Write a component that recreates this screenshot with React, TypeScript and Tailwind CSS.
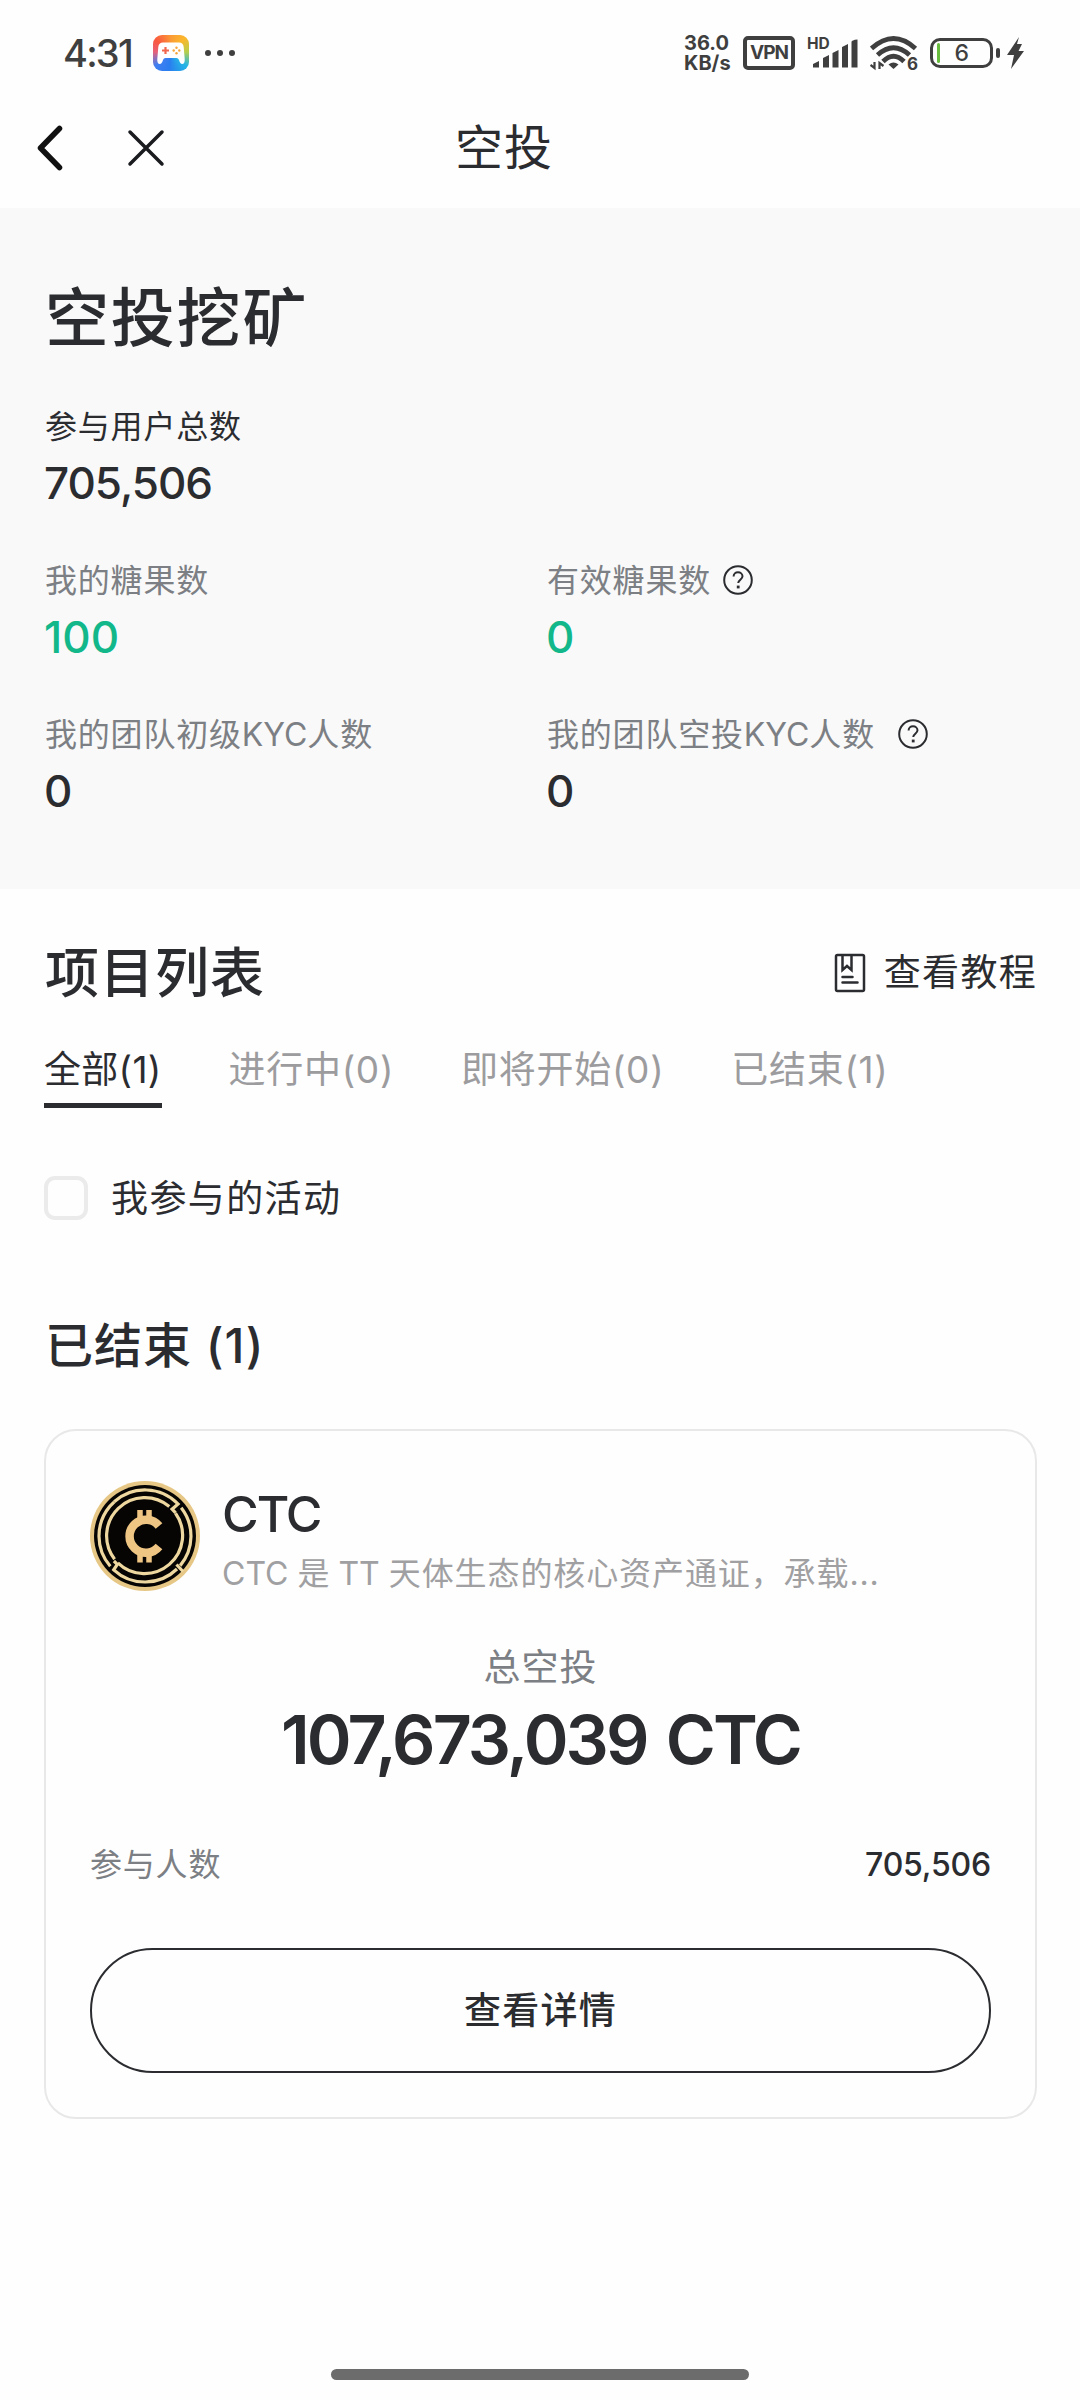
import type { ReactNode } from "react";

function HelpIcon() {
  return (
    <svg width="30" height="30" viewBox="0 0 30 30" fill="none" stroke="#2b2c30" strokeWidth="2">
      <circle cx="15" cy="15" r="13.8" />
      <path d="M10.6 11.6c0-2.6 1.9-4.3 4.4-4.3s4.5 1.6 4.5 4c0 3.3-4.3 3.5-4.3 6.8" />
      <path d="M13.8 22h2.8" strokeWidth="2.8" />
    </svg>
  );
}

function GameIcon() {
  return (
    <div className="h-9 w-9 overflow-hidden rounded-[9px] bg-[conic-gradient(from_0deg,#fb9a35,#fbb72c_12%,#b5cf4c_24%,#25b5e6_36%,#2a7df0_52%,#3f7ff2_64%,#e8617a_76%,#f9573f_86%,#fb9a35)]">
      <svg width="36" height="36" viewBox="0 0 36 36">
        <path d="M10 7.5h16c3 0 4.300 1.500 4.700 4.500l1 12c.3 3-.8 5-2.400 5s-2.500-1.600-3.300-4c-.5-1.300-1.300-2-2.500-2h-11c-1.200 0-2 .7-2.500 2-.8 2.400-1.700 4-3.300 4s-2.700-2-2.400-5l1-12c.4-3 1.700-4.500 4.700-4.500z" fill="#fff" />
        <path d="M12.500 12v7M9 15.500h7" stroke="#f2684f" strokeWidth="2.200" />
        <g fill="#f6a53a">
          <circle cx="23.500" cy="12.700" r="1.200" />
          <circle cx="23.500" cy="18.300" r="1.200" />
          <circle cx="20.700" cy="15.500" r="1.200" />
          <circle cx="26.300" cy="15.500" r="1.200" />
        </g>
      </svg>
    </div>
  );
}

function StatusBar() {
  return (
    <div className="flex h-[108px] items-center pr-14 pb-0.5 pl-[63px] text-[#3f3f40]">
      <div className="w-[90px] text-[38px] font-medium tracking-[-1.8px]">4:31</div>
      <GameIcon />
      <div className="ml-4 flex gap-1.5">
        <i className="h-1.5 w-1.5 rounded-full bg-[#3f3f40]" />
        <i className="h-1.5 w-1.5 rounded-full bg-[#3f3f40]" />
        <i className="h-1.5 w-1.5 rounded-full bg-[#3f3f40]" />
      </div>
      <div className="ml-auto flex items-center">
        <div className="w-[59px] text-[20px] leading-5 font-bold">
          <div>36.0</div>
          <div>KB/s</div>
        </div>
        <div className="flex h-[34px] w-[52px] items-center justify-center rounded-[5px] border-4 border-[#3f3f40] text-[19px] font-bold tracking-[-1px]">
          VPN
        </div>
        <div className="relative ml-3 h-[34px] w-[51px]">
          <span className="absolute top-[1px] left-0 text-[15.500px] leading-[14px] font-bold">HD</span>
          <svg className="absolute top-0 left-0" width="51" height="34" viewBox="0 0 51 34" fill="#3f3f40">
            <path d="M6 31.500V28l6-3v6.500zM16 31.500V22l6-3v12.500zM25.500 31.500V17l6-3v17.500zM35 31.500V11l6-3v23.500zM44.500 31.500V6q0-2 6-2.500v28z" />
          </svg>
        </div>
        <div className="relative ml-3 h-[36px] w-[48px]">
          <svg width="48" height="36" viewBox="0 0 48 36" fill="none" stroke="#3f3f40" strokeWidth="4.800">
            <path d="M1.500 13.500Q23.500-6.500 45.500 13.500" />
            <path d="M7.500 20Q23.500 5.500 39.500 20" />
            <path d="M13 26.500Q23.500 16 34 26.500" />
            <path d="M23.500 34l-5-4.500q5-4 10 0z" fill="#3f3f40" stroke="none" />
            <path d="M4.500 27v6l-4-3M9.500 34v-6l4 3" strokeWidth="2.200" />
          </svg>
          <span className="absolute top-[22px] left-[37px] text-[17px] leading-[14px] font-bold">6</span>
        </div>
        <div className="ml-3 flex h-[30px] w-[63px] items-center rounded-[10px] border-[3px] border-[#3f3f40] pl-1">
          <div className="h-[20px] w-[2.500px] rounded-full bg-[#68bd3f]" />
          <div className="flex-1 pr-1.5 text-center text-[23px] leading-none font-medium">6</div>
        </div>
        <div className="ml-[3px] h-[10px] w-1 rounded-full bg-[#3f3f40]" />
        <svg className="ml-[7px]" width="17" height="32" viewBox="0 0 17 32" fill="#3f3f40">
          <path d="M12 0 0 18h7L4 32l13-18h-5.500L15 7h-5z" />
        </svg>
      </div>
    </div>
  );
}

function NavBar() {
  return (
    <div className="flex h-[100px] items-center pb-[21px]">
      <svg className="ml-9" width="29" height="46" viewBox="0 0 29 46" fill="none" stroke="#111" strokeWidth="5.500" strokeLinecap="round" strokeLinejoin="round">
        <path d="M23.500 3.500 4.500 23l19 19.500" />
      </svg>
      <svg className="ml-[61px]" width="40" height="40" viewBox="0 0 40 40" fill="none" stroke="#1a1b1e" strokeWidth="3.500" strokeLinecap="round">
        <path d="m4 4 32 32M36 4 4 36" />
      </svg>
      <h1 className="ml-[289px] text-[48px] tracking-[1px]">空投</h1>
    </div>
  );
}

function Stat({ label, value, color, labelColor, icon }: { label: ReactNode; value: string; color: string; labelColor: string; icon?: string }) {
  return (
    <div>
      <div className={`flex h-12 items-center pl-px text-[32px] tracking-[0.8px] ${labelColor}`}>
        <span>{label}</span>
        {icon && (
          <span className={icon}>
            <HelpIcon />
          </span>
        )}
      </div>
      <div className={`mt-0.5 flex h-[60px] items-center text-[44px] font-medium ${color}`}>{value}</div>
    </div>
  );
}

function Tab({ children, active }: { children: ReactNode; active?: boolean }) {
  return (
    <div className={active ? "h-[63px] border-b-[5px] border-[#2b2c30] tracking-[0.300px] text-[#2b2c30]" : "h-[63px] tracking-[0.700px] text-[#9c9c9e]"}>
      <span className="text-[37px] leading-[49px]">{children}</span>
    </div>
  );
}

function CoinLogo() {
  return (
    <svg width="110" height="110" viewBox="0 0 110 110" fill="none">
      <circle cx="55" cy="55" r="55" fill="#e6c785" />
      <circle cx="55" cy="55" r="51" fill="#060504" />
      <g stroke="#eed8a0" strokeWidth="3.2">
        <path d="M24.200 20.800A46 46 0 0 1 88.100 23l-6 5.200 3.500 3.600" />
        <path d="M91.200 26.700A46 46 0 0 1 90.200 84.600" />
        <path d="M87 88A46 46 0 0 1 23.700 88.800l3.600-5.400-3.400-3.400" />
        <path d="M20.300 85.200A46 46 0 0 1 19.800 25.400l4.500-4.500" />
        <path d="M79.300 25.500A38.200 38.200 0 0 0 24.600 78.200" />
        <path d="M85.500 32.200A38.200 38.200 0 0 1 27.800 81.800" />
        <path d="m86.500 83.500 6.500 7" />
      </g>
      <path d="M69 45A16.500 16.500 0 1 0 69 65.500" stroke="#efc583" strokeWidth="8.500" />
      <path d="M50 29v10M59 29v10M50 71.500v10M59 71.500v10" stroke="#efc583" strokeWidth="5.500" />
    </svg>
  );
}

export default function App() {
  return (
    <div className="flex h-[2400px] w-[1080px] flex-col bg-[#fefefe] font-['Inter','Noto_Sans_CJK_SC',sans-serif] text-[#2b2c30]">
      <StatusBar />
      <NavBar />

      <section className="h-[681px] bg-[#f9f9f9] px-11 pt-[70px]">
        <h2 className="h-20 pl-px text-[64px] leading-[80px] font-medium tracking-[1.800px]">空投挖矿</h2>
        <div className="mt-[45px] grid grid-cols-[502px_1fr] gap-y-11">
          <div className="col-span-2">
            <Stat label="参与用户总数" value="705,506" color="text-[#2b2c30] tracking-[-1px]" labelColor="text-[#2b2c30]" />
          </div>
          <Stat label="我的糖果数" value="100" color="text-[#12b78a]" labelColor="text-[#7c7f84]" />
          <Stat label="有效糖果数" value="0" color="text-[#12b78a]" labelColor="text-[#7c7f84]" icon="ml-3 mb-0.5" />
          <Stat
            label={<>我的团队初级<span className="tracking-[0px]">KYC</span>人数</>}
            value="0"
            color="text-[#2b2c30]"
            labelColor="text-[#7c7f84]"
          />
          <Stat
            label={<>我的团队空投<span className="tracking-[0px]">KYC</span>人数</>}
            value="0"
            color="text-[#2b2c30]"
            labelColor="text-[#7c7f84]"
            icon="ml-[23px] mb-0.5"
          />
        </div>
      </section>

      <section className="px-11 pt-11">
        <div className="flex h-20 items-center justify-between">
          <h2 className="pl-px text-[54px] font-medium tracking-[1px]">项目列表</h2>
          <div className="flex items-center text-[37px] tracking-[1.300px]">
            <svg className="mr-[18px]" width="32" height="40" viewBox="0 0 32 40" fill="none" stroke="#2b2c30" strokeWidth="2.500">
              <rect x="2" y="2" width="28" height="36" rx="1.500" />
              <path d="M8.500 2v15l4.500-4 4.500 4V2" />
              <path d="M8.500 24h10M8.500 29.500h15" strokeLinecap="round" />
            </svg>
            <span className="-mr-px">查看教程</span>
          </div>
        </div>
        <div className="mt-8 flex gap-[67px]">
          <Tab active>全部(1)</Tab>
          <Tab>进行中(0)</Tab>
          <Tab>即将开始(0)</Tab>
          <Tab>已结束(1)</Tab>
        </div>
        <div className="mt-[66px] flex h-[48px] items-center gap-[23px]">
          <div className="h-11 w-11 rounded-[11px] border-4 border-[#ebebeb]" />
          <span className="pt-0.5 text-[37px] tracking-[1.400px]">我参与的活动</span>
        </div>
        <h3 className="mt-[92px] h-16 pl-px text-[48px] leading-[64px] font-medium tracking-[1px]">已结束 (1)</h3>

        <div className="mt-[51px] h-[690px] w-[993px] rounded-[32px] border-2 border-[#e8e8e8] px-11 pt-[50px]">
          <div className="flex h-[110px] gap-[22px]">
            <CoinLogo />
            <div>
              <div className="h-[65px] text-[50px] leading-[66px] font-medium tracking-[-2px]">CTC</div>
              <div className="h-14 text-[32px] leading-[56px] tracking-[0.900px] text-[#a0a0a2]">
                <span className="tracking-[0px]">CTC 是 TT </span>天体生态的核心资产通证，承载...
              </div>
            </div>
          </div>
          <div className="mt-[51px] text-center text-[37px] leading-[52px] tracking-[1px] text-[#7c7f84]">总空投</div>
          <div className="mt-[5px] text-center text-[68px] leading-[80px] font-semibold tracking-[-2.900px] [word-spacing:5px]">107,673,039 CTC</div>
          <div className="mt-[62px] flex h-12 items-center justify-between text-[32px]">
            <span className="tracking-[0.8px] text-[#7c7f84]">参与人数</span>
            <span className="font-medium tracking-[-0.200px]">705,506</span>
          </div>
          <button className="mt-[59px] flex h-[125px] w-[901px] items-center justify-center rounded-full border-2 border-[#2b2c30] text-[37px] font-medium tracking-[1.300px]">
            查看详情
          </button>
        </div>
      </section>

      <div className="mx-auto mt-auto mb-5 h-[11px] w-[418px] rounded-full bg-[#6c6c6c]" />
    </div>
  );
}
